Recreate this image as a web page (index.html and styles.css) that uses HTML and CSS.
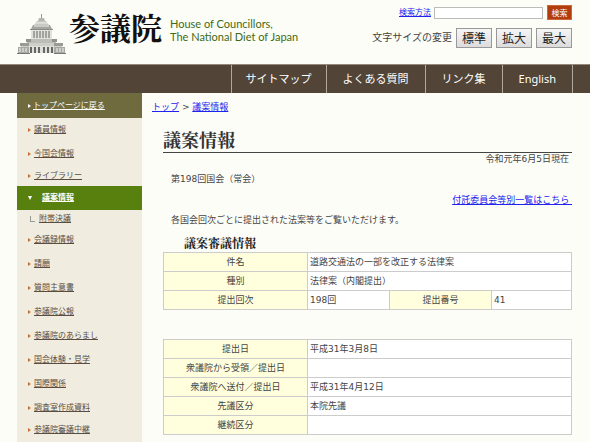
FILE: index.html
```
<!DOCTYPE html>
<html lang="ja">
<head>
    <meta charset="UTF-8">
    <meta name="viewport" content="width=device-width, initial-scale=1.0">
    <title>議案情報：参議院</title>
    <link rel="stylesheet" href="styles.css">
</head>
<body>
    <header class="header">
        <div class="logo">
            <svg class="logo-building" viewBox="0 0 50 42" aria-hidden="true">
                <path d="M24 1h1v4h-1z" fill="#999"/>
                <path d="M22 5h5l1 3h-7z" fill="#b5b5b0"/>
                <path d="M20 8h9l3 4H17z" fill="#c9c9c4"/>
                <path d="M16 12h17l2 4H14z" fill="#a5a5a0"/>
                <path d="M18 10h13M17 13h15" stroke="#eee" stroke-width="1"/>
                <path d="M14 17h21v9H14z" fill="#e2e2dc"/>
                <path d="M17 18v7M20 18v7M23 18v7M26 18v7M29 18v7M32 18v7" stroke="#777" stroke-width="1.2"/>
                <path d="M13 16.5h23" stroke="#8b8b86"/>
                <path d="M10 26h29v5H10z" fill="#bdbdb7"/>
                <path d="M9 26h5v3H9zM35 26h5v3h-5z" fill="#92928c"/>
                <path d="M4 30h41v4H4z" fill="#cfcfc9"/>
                <path d="M3 30h9v3H3zM37 30h9v3h-9z" fill="#9b9b95"/>
                <path d="M1 34h47v6H1z" fill="#a9a9a3"/>
                <path d="M12 33h25v7H12z" fill="#e0e0da"/>
                <path d="M14 34v6M18 34v6M22 34v6M27 34v6M31 34v6M35 34v6" stroke="#666" stroke-width="2"/>
                <path d="M3 35v4M6 35v4M9 35v4M40 35v4M43 35v4M46 35v4" stroke="#efefe9"/>
                <path d="M0 40.5h13M37 40.5h12" stroke="#777"/>
            </svg>
            <span class="logo-name">参議院</span>
            <span class="logo-en">House of Councillors,<br>The National Diet of Japan</span>
        </div>
        <div class="tools">
            <form class="search">
                <a href="#">検索方法</a>
                <input type="text" class="search-box" aria-label="検索">
                <button type="button" class="search-button">検索</button>
            </form>
            <div class="font-size">
                <span>文字サイズの変更</span>
                <button type="button">標準</button>
                <button type="button">拡大</button>
                <button type="button">最大</button>
            </div>
        </div>
    </header>

    <nav class="global-nav">
        <a href="#">サイトマップ</a>
        <a href="#">よくある質問</a>
        <a href="#">リンク集</a>
        <a href="#">English</a>
    </nav>

    <div class="wrapper">
        <ul class="side-menu">
            <li class="back"><a href="#">トップページに戻る</a></li>
            <li><a href="#">議員情報</a></li>
            <li><a href="#">今国会情報</a></li>
            <li class="short"><a href="#">ライブラリー</a></li>
            <li class="current"><a href="#">議案情報</a></li>
            <li class="sub"><a href="#">附帯決議</a></li>
            <li><a href="#">会議録情報</a></li>
            <li><a href="#">請願</a></li>
            <li><a href="#">質問主意書</a></li>
            <li><a href="#">参議院公報</a></li>
            <li><a href="#">参議院のあらまし</a></li>
            <li><a href="#">国会体験・見学</a></li>
            <li><a href="#">国際関係</a></li>
            <li><a href="#">調査室作成資料</a></li>
            <li class="short"><a href="#">参議院審議中継</a></li>
        </ul>

        <main class="main">
            <div class="breadcrumb"><a href="#">トップ</a> &gt; <a href="#">議案情報</a></div>
            <div class="contents">
                <h1>議案情報</h1>
                <p class="date">令和元年6月5日現在</p>
                <p class="session">第198回国会（常会）</p>
                <p class="list-link"><a href="#">付託委員会等別一覧はこちら&nbsp;</a></p>
                <p class="lead">各国会回次ごとに提出された法案等をご覧いただけます。</p>

                <h2>議案審議情報</h2>
                <table>
                    <colgroup>
                        <col class="col-head">
                        <col class="col-value">
                        <col class="col-subhead">
                        <col>
                    </colgroup>
                    <tr><th scope="row">件名</th><td colspan="3">道路交通法の一部を改正する法律案</td></tr>
                    <tr><th scope="row">種別</th><td colspan="3">法律案（内閣提出）</td></tr>
                    <tr><th scope="row">提出回次</th><td>198回</td><th scope="row">提出番号</th><td>41</td></tr>
                </table>

                <table>
                    <colgroup>
                        <col class="col-head">
                        <col>
                    </colgroup>
                    <tr><th scope="row">提出日</th><td>平成31年3月8日</td></tr>
                    <tr><th scope="row">衆議院から受領／提出日</th><td></td></tr>
                    <tr><th scope="row">衆議院へ送付／提出日</th><td>平成31年4月12日</td></tr>
                    <tr><th scope="row">先議区分</th><td>本院先議</td></tr>
                    <tr><th scope="row">継続区分</th><td></td></tr>
                </table>
            </div>
        </main>
    </div>
</body>
</html>
```
FILE: styles.css
```
* {
    box-sizing: border-box;
}

body {
    display: flex;
    flex-direction: column;
    min-height: 100vh;
    margin: 0;
    background-color: #fdfdf8;
    color: #444;
    font-family: "DejaVu Sans", "Noto Sans CJK JP", sans-serif;
    font-size: 9px;
    line-height: 14px;
}

h1, h2, p, ul {
    margin: 0;
    padding: 0;
}

a {
    color: #2222ee;
}

button, input {
    margin: 0;
    padding: 0;
    font-family: "Noto Sans CJK JP", sans-serif;
}

/* ヘッダー */
.header {
    display: flex;
    justify-content: space-between;
    height: 64px;
    padding: 0 18px 0 17px;
}

.logo {
    display: flex;
    align-items: flex-start;
    white-space: nowrap;
}

.logo-building {
    width: 50px;
    height: 42px;
    margin-top: 13px;
}

.logo-name {
    width: 103px;
    margin-top: 9px;
    padding-left: 2px;
    color: #111;
    font-family: "Noto Serif CJK JP", "Noto Sans CJK JP", serif;
    font-size: 31px;
    font-weight: bold;
    line-height: 36px;
}

.logo-en {
    margin-top: 17px;
    color: #3f6b14;
    font-family: Lato, sans-serif;
    font-size: 11px;
    line-height: 13px;
}

.tools {
    display: flex;
    flex-direction: column;
    align-items: flex-end;
    gap: 8px;
    padding-top: 5px;
}

.search {
    display: flex;
    align-items: center;
    font-size: 8px;
}

.search-box {
    width: 109px;
    height: 12px;
    margin: 0 4px 0 3px;
    border: 1px solid #bbb;
    background-color: #fff;
    font-size: 8px;
}

.search-button {
    width: 25px;
    height: 15px;
    border: 1px solid #c9683c;
    background-color: #b23c0c;
    color: #fff;
    font-size: 8px;
    line-height: 12px;
}

.font-size {
    display: flex;
    align-items: center;
    gap: 4px;
    font-size: 10px;
}

.font-size button {
    width: 36px;
    height: 20px;
    border: 1px solid #999;
    background: linear-gradient(#f6f6f6, #dcdcdc);
    color: #222;
    font-size: 12px;
    line-height: 16px;
}

/* グローバルナビ */
.global-nav {
    display: flex;
    justify-content: flex-end;
    height: 29px;
    padding-right: 17px;
    border-top: 1px solid #96897b;
    background-color: #524537;
}

.global-nav a {
    padding: 0 16px;
    border-left: 1px solid #b0a89e;
    color: #fff;
    font-family: "Noto Sans", "Noto Sans CJK JP", sans-serif;
    font-size: 11px;
    line-height: 27px;
    text-decoration: none;
}

.global-nav a:first-child {
    padding: 0 14px;
}

.global-nav a:last-child {
    border-right: 1px solid #b0a89e;
}

.wrapper {
    display: flex;
    flex: 1;
    padding: 0 18px 0 17px;
}

/* サイドメニュー */
.side-menu {
    flex: none;
    width: 125px;
    background-color: #f0ede0;
    font-size: 8px;
    line-height: 24px;
    list-style: none;
}

.side-menu li {
    display: flex;
    align-items: center;
    height: 24px;
    padding-left: 11px;
}

.side-menu li::before {
    content: "";
    margin-right: 3px;
    border: 2px solid transparent;
    border-left: 3px solid #c8703a;
    border-right: 0;
}

.side-menu a {
    color: #5a4c40;
}

.side-menu .short {
    height: 20px;
}

.side-menu .back {
    height: 25px;
    background-color: #706b3f;
}

.side-menu .back::before {
    margin-right: 2px;
    border-left-color: #fff;
}

.side-menu .back a,
.side-menu .current a {
    color: #fff;
}

.side-menu .current {
    background-color: #57800f;
    font-weight: bold;
}

.side-menu .current::before {
    margin-right: 10px;
    border: 2px solid transparent;
    border-top: 4px solid #fff;
    border-bottom: 0;
}

.side-menu .sub {
    height: 18px;
    padding-left: 13px;
}

.side-menu .sub::before {
    width: 4px;
    height: 5px;
    margin-right: 4px;
    border: 0;
    border-left: 1px solid #999;
    border-bottom: 1px solid #999;
}

/* メイン */
.main {
    flex: 1;
    padding: 7px 0 0 10px;
}

.contents {
    margin-left: 11px;
}

h1 {
    margin-top: 13px;
    padding-bottom: 1px;
    border-bottom: 1px solid #444;
    color: #333;
    font-family: "Noto Serif CJK JP", "Noto Sans CJK JP", serif;
    font-size: 18px;
    line-height: 24px;
}

.date {
    padding-right: 3px;
    line-height: 12px;
    text-align: right;
}

.session {
    margin-top: 7px;
    padding-left: 8px;
}

.list-link {
    margin-top: 7px;
    text-align: right;
}

.lead {
    margin-top: 6px;
    padding-left: 8px;
}

h2 {
    margin-top: 7px;
    padding-left: 21px;
    color: #222;
    font-family: "Noto Serif CJK JP", "Noto Sans CJK JP", serif;
    font-size: 12px;
    line-height: 18px;
}

table {
    width: 100%;
    margin-bottom: 29px;
    border-collapse: collapse;
    table-layout: fixed;
}

table:last-child {
    margin-bottom: 0;
}

.col-head {
    width: 144px;
}

.col-value {
    width: 82px;
}

.col-subhead {
    width: 102px;
}

th, td {
    height: 19px;
    padding: 0 2px;
    border: 1px solid #ccc;
}

th {
    background-color: #ffffdd;
    font-weight: normal;
}

td {
    background-color: #fff;
}
```
